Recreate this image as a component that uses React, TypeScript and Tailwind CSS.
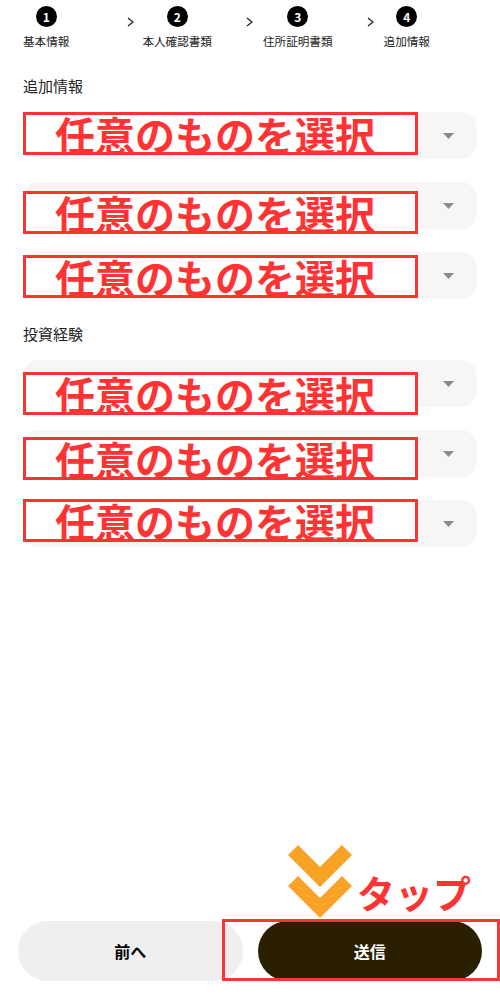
import React from 'react';

const STEPS = ['基本情報', '本人確認書類', '住所証明書類', '追加情報'];

// red annotation box offset (px) from each select's top
const SECTIONS = [
  { title: '追加情報', offsets: [0, 9, 3] },
  { title: '投資経験', offsets: [12, 7, -1] },
];

function Chevron({ className }: { className?: string }) {
  return (
    <svg className={className} width="7" height="10" viewBox="0 0 7 10" fill="none">
      <polyline points="1,1 6,5 1,9" stroke="#222" strokeWidth="1.3" />
    </svg>
  );
}

function Step({ n, label }: { n: number; label: string }) {
  return (
    <div className="flex flex-col items-center">
      <div className="w-[21px] h-[21px] rounded-full bg-black text-white text-[12px] font-bold leading-none flex items-center justify-center">
        {n}
      </div>
      <span className="mt-[7px] text-[11.6px] leading-[14px] text-[#222]">{label}</span>
    </div>
  );
}

function SelectRow({ offset }: { offset: number }) {
  return (
    <div className="relative h-[47px] rounded-[16px] bg-[#f6f6f6] flex items-center justify-end pr-[23px]">
      <svg width="11" height="6" viewBox="0 0 11 6">
        <polygon points="0,0 11,0 5.5,6" fill="#8a8a8a" />
      </svg>
      <div
        className="absolute left-0 w-[395px] h-[43px] border-[3px] border-[#fe3333] bg-white flex items-center pl-[29px]"
        style={{ top: offset }}
      >
        <span className="text-[40px] font-bold leading-none text-[#fe3333] whitespace-nowrap">任意のものを選択</span>
      </div>
    </div>
  );
}

export default function App() {
  return (
    <div className="w-[500px] h-[1000px] bg-white flex flex-col font-['Noto_Sans_CJK_JP','Noto_Sans',sans-serif] text-[#222]">
      <div className="flex items-start pl-[23px] pt-[6px]">
        <Step n={1} label={STEPS[0]} />
        <Chevron className="ml-[58px] mt-[11px]" />
        <div className="ml-[8px]"><Step n={2} label={STEPS[1]} /></div>
        <Chevron className="ml-[34px] mt-[11px]" />
        <div className="ml-[10px]"><Step n={3} label={STEPS[2]} /></div>
        <Chevron className="ml-[34px] mt-[11px]" />
        <div className="ml-[10px]"><Step n={4} label={STEPS[3]} /></div>
      </div>

      <div className="px-[23px] flex flex-col">
        {SECTIONS.map((s, i) => (
          <div key={s.title} className={i === 0 ? 'mt-[28px]' : 'mt-[25px]'}>
            <h3 className="text-[15px] leading-[20px] text-[#222]">{s.title}</h3>
            <div className="mt-[16px] flex flex-col gap-[23px]">
              {s.offsets.map((o, j) => (
                <SelectRow key={j} offset={o} />
              ))}
            </div>
          </div>
        ))}
      </div>

      <div className="mt-auto relative px-[18px] pb-[19px] flex gap-[15px]">
        <button className="flex-1 h-[60px] rounded-full bg-[#efefef] text-[16px] font-bold text-black">前へ</button>
        <button className="flex-1 h-[60px] rounded-full bg-[#2a2000] text-[16px] font-bold text-white">送信</button>

        {/* annotation overlays */}
        <svg className="absolute left-[288px] top-[-76px]" width="64" height="76" viewBox="0 0 64 76">
          <polygon points="0,10 10,0 32,22 54,0 64,10 32,42" fill="#f9a326" />
          <polygon points="0,41 10,31 32,53 54,31 64,41 32,73" fill="#f9a326" />
        </svg>
        <span className="absolute left-[357px] top-[-48px] text-[38px] font-bold leading-none text-[#fe3333]">タップ</span>
        <div className="absolute left-[222px] top-[-2px] w-[278px] h-[62px] border-[3px] border-[#fe3333]" />
      </div>
    </div>
  );
}
